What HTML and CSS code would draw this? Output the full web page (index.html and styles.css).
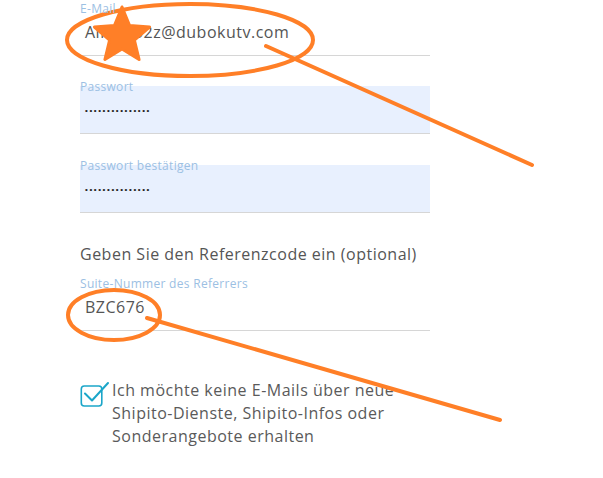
FILE: index.html
```html
<!DOCTYPE html>
<html lang="de">
<head>
<meta charset="utf-8">
<title>Registrierung</title>
<link rel="stylesheet" href="styles.css">
</head>
<body>
<form class="form">
  <div class="field first">
    <label class="label">E-Mail</label>
    <div class="input">Alibeko2z@dubokutv.com</div>
  </div>
  <div class="field">
    <label class="label">Passwort</label>
    <div class="input filled"><span class="dots">•••••••••••••••</span></div>
  </div>
  <div class="field">
    <label class="label">Passwort bestätigen</label>
    <div class="input filled"><span class="dots">•••••••••••••••</span></div>
  </div>
  <h3 class="heading">Geben Sie den Referenzcode ein (optional)</h3>
  <div class="field ref">
    <label class="label">Suite-Nummer des Referrers</label>
    <div class="input">BZC676</div>
  </div>
  <div class="check-row">
    <span class="checkbox">
      <svg width="29" height="28" viewBox="0 0 29 28">
        <rect x="1.3" y="7" width="20.5" height="20" rx="3" ry="3" fill="none" stroke="#1ba6c9" stroke-width="1.6"/>
        <path d="M5 14.5 L12 21.5 L28 4" fill="none" stroke="#1ba6c9" stroke-width="2" stroke-linecap="round" stroke-linejoin="round"/>
      </svg>
    </span>
    <span class="check-text">Ich möchte keine E-Mails über neue Shipito-Dienste, Shipito-Infos oder Sonderangebote erhalten</span>
  </div>
</form>
<svg class="marks" width="603" height="478" viewBox="0 0 603 478">
  <g fill="none" stroke="#ff7f27" stroke-width="4" stroke-linecap="round">
    <ellipse cx="190" cy="40" rx="123" ry="36"/>
    <line x1="266" y1="46" x2="532" y2="165"/>
    <ellipse cx="114" cy="315" rx="46" ry="25"/>
    <line x1="147" y1="318" x2="500" y2="420"/>
  </g>
  <polygon points="122,7 129.6,25.5 149.6,27 134.4,40 139.1,59.5 122,49 104.9,59.5 109.6,40 94.4,27 114.4,25.5" fill="#ff7f27" stroke="#ff7f27" stroke-width="3" stroke-linejoin="round"/>
</svg>
</body>
</html>
```
FILE: styles.css
```css
html, body {
  margin: 0;
  padding: 0;
  background: #ffffff;
}
body {
  width: 603px;
  height: 478px;
  overflow: hidden;
  position: relative;
  font-family: "Open Sans", "DejaVu Sans", sans-serif;
}
.form {
  width: 350px;
  margin: 0 0 0 80px;
  padding-top: 8px;
  display: flex;
  flex-direction: column;
}
.field {
  position: relative;
  margin-bottom: 31px;
}
.field.first {
  margin-bottom: 30px;
}
.label {
  position: absolute;
  left: 0;
  top: -7px;
  font-size: 12px;
  line-height: 15px;
  letter-spacing: 0.3px;
  color: #9cc0e3;
  z-index: 1;
}
.input {
  height: 48px;
  box-sizing: border-box;
  border-bottom: 1px solid #d6d6d6;
  padding: 1px 0 0 5px;
  display: flex;
  align-items: center;
  font-size: 16px;
  color: #555555;
  letter-spacing: 0.5px;
}
.input.filled {
  background: #e8f0fe;
}
.dots {
  font-family: "Liberation Sans", sans-serif;
  font-size: 8px;
  letter-spacing: 1.6px;
  color: #222;
}
.heading {
  margin: 0 0 19px 0;
  font-size: 16px;
  line-height: 20px;
  font-weight: 400;
  color: #555555;
  letter-spacing: 0.5px;
}
.field.ref {
  margin-bottom: 48px;
}
.check-row {
  display: flex;
  align-items: flex-start;
  gap: 3px;
}
.checkbox {
  flex: none;
  width: 29px;
  height: 28px;
}
.checkbox svg {
  display: block;
}
.check-text {
  width: 318px;
  font-size: 16px;
  line-height: 23px;
  color: #5a5a5a;
  letter-spacing: 0.5px;
}
.marks {
  position: absolute;
  left: 0;
  top: 0;
  pointer-events: none;
}
```
